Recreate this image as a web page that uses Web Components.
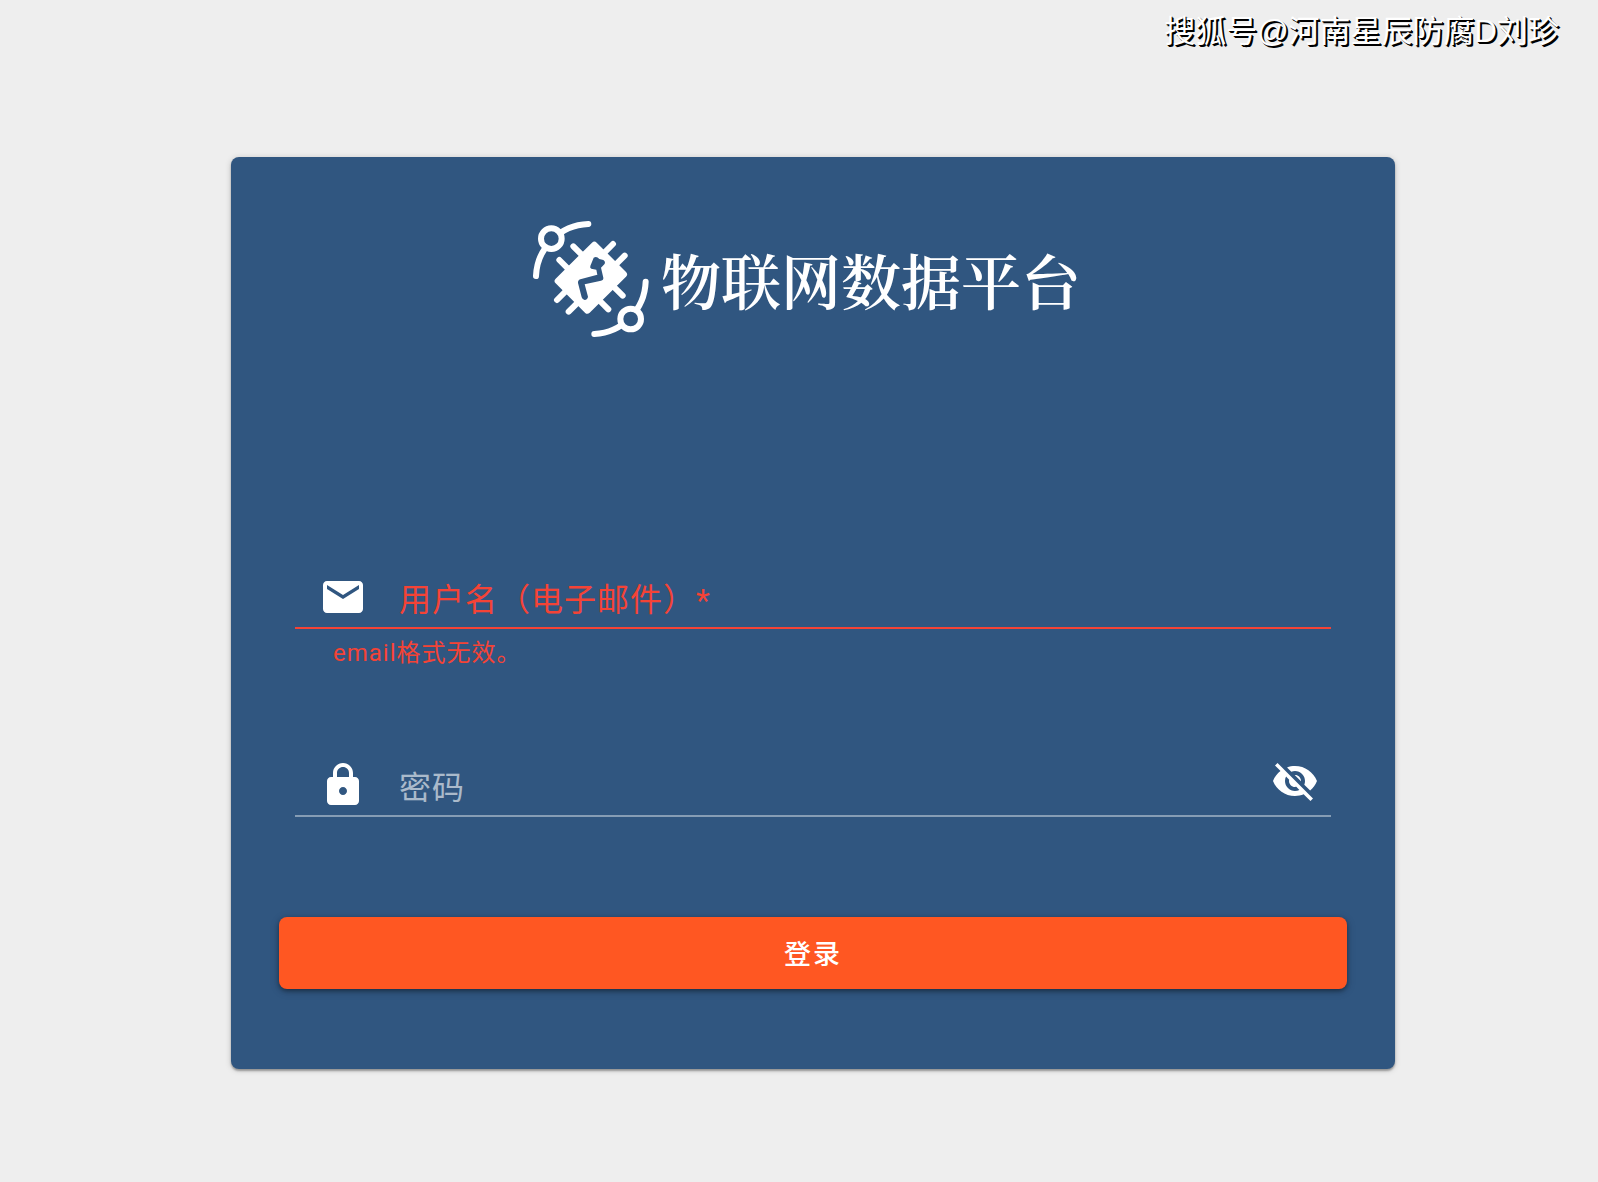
<!DOCTYPE html>
<html lang="zh-CN">
<head>
<meta charset="utf-8">
<meta name="viewport" content="width=device-width, initial-scale=1">
<title>物联网数据平台</title>
<style>
    :root {
        --color-page: #eeeeee;
        --color-primary: #305680;
        --color-accent: #ff5722;
        --color-error: #f44336;
        --color-hint: rgba(255, 255, 255, 0.6);
        --color-line: rgba(255, 255, 255, 0.42);
    }

    body {
        margin: 0;
        background: var(--color-page);
        font-family: Roboto, "Noto Sans CJK SC", sans-serif;
    }
</style>
</head>
<body>
<login-page>
    <page-credit slot="credit">搜狐号@河南星辰防腐D刘珍</page-credit>
    <login-card>
        <brand-logo slot="logo">物联网数据平台</brand-logo>
        <form-field icon="mail" type="email" label="用户名（电子邮件）" required error="email格式无效。"></form-field>
        <form-field icon="lock" type="password" label="密码"></form-field>
        <submit-button slot="action">登录</submit-button>
    </login-card>
</login-page>

<script>
const ICONS = {
    mail: 'M20 4H4c-1.1 0-1.99.9-1.99 2L2 18c0 1.1.9 2 2 2h16c1.1 0 2-.9 2-2V6c0-1.1-.9-2-2-2zm0 4l-8 5-8-5V6l8 5 8-5v2z',
    lock: 'M18 8h-1V6c0-2.76-2.24-5-5-5S7 3.24 7 6v2H6c-1.1 0-2 .9-2 2v10c0 1.1.9 2 2 2h12c1.1 0 2-.9 2-2V10c0-1.1-.9-2-2-2zm-6 9c-1.1 0-2-.9-2-2s.9-2 2-2 2 .9 2 2-.9 2-2 2zm3-9H9V6c0-1.71 1.39-3 3-3s3 1.29 3 3v2z',
    hidden: 'M12 7c2.76 0 5 2.24 5 5 0 .65-.13 1.26-.36 1.83l2.92 2.92c1.51-1.26 2.7-2.89 3.43-4.75-1.73-4.39-6-7.5-11-7.5-1.4 0-2.74.25-3.98.7l2.16 2.16C10.74 7.13 11.35 7 12 7zM2 4.27l2.28 2.28.46.46C3.08 8.3 1.78 10.02 1 12c1.73 4.39 6 7.5 11 7.5 1.55 0 3.03-.3 4.38-.84l.42.42L19.73 22 21 20.73 3.27 3 2 4.27zM7.53 9.8l1.55 1.55c-.05.21-.08.43-.08.65 0 1.66 1.34 3 3 3 .22 0 .44-.03.65-.08l1.55 1.55c-.67.33-1.41.53-2.2.53-2.76 0-5-2.24-5-5 0-.79.2-1.53.53-2.2zm4.31-.78l3.15 3.15.02-.16c0-1.66-1.34-3-3-3l-.17.01z',
    visible: 'M12 4.5C7 4.5 2.73 7.61 1 12c1.73 4.39 6 7.5 11 7.5s9.27-3.11 11-7.5c-1.73-4.39-6-7.5-11-7.5zM12 17c-2.76 0-5-2.24-5-5s2.24-5 5-5 5 2.24 5 5-2.24 5-5 5zm0-8c-1.66 0-3 1.34-3 3s1.34 3 3 3 3-1.34 3-3-1.34-3-3-3z'
};

const iconSvg = (name) => `<svg viewBox="0 0 24 24" aria-hidden="true"><path d="${ICONS[name]}"/></svg>`;

/** <login-page>: credit line on top, card below it. */
class LoginPage extends HTMLElement {
    constructor() {
        super();
        this.attachShadow({ mode: 'open' });
        this.shadowRoot.innerHTML = `
            <style>
                :host {
                    display: flex;
                    flex-direction: column;
                    min-height: 100vh;
                    box-sizing: border-box;
                }

                main {
                    padding: 93px 203px 113px 231px;
                }

                @media (max-width: 1000px) {
                    main {
                        padding: 32px 16px;
                    }
                }
            </style>
            <slot name="credit"></slot>
            <main><slot></slot></main>`;
    }
}

/** <page-credit>: outlined account name in the top corner. */
class PageCredit extends HTMLElement {
    constructor() {
        super();
        this.attachShadow({ mode: 'open' });
        this.shadowRoot.innerHTML = `
            <style>
                :host {
                    display: block;
                    padding: 0 39px;
                    font-family: "Liberation Sans", "Noto Sans CJK SC", sans-serif;
                    font-size: 31px;
                    line-height: 64px;
                    text-align: right;
                    color: #fff;
                    text-shadow: 1px 1px 0 #000, 2px 2px 0 #000;
                }
            </style>
            <slot></slot>`;
    }
}

/** <login-card>: blue panel holding the logo, the fields and the action. */
class LoginCard extends HTMLElement {
    constructor() {
        super();
        this.attachShadow({ mode: 'open' });
        this.shadowRoot.innerHTML = `
            <style>
                :host {
                    display: block;
                    padding: 64px 48px 80px;
                    border-radius: 8px;
                    background: var(--color-primary);
                    color: #fff;
                    box-shadow: 0 2px 2px rgba(0, 0, 0, 0.3), 0 1px 6px rgba(0, 0, 0, 0.18);
                }

                form {
                    display: flex;
                    flex-direction: column;
                    margin-top: 230px;
                }

                .fields {
                    display: flex;
                    flex-direction: column;
                    gap: 80px;
                    padding: 0 16px;
                    margin-bottom: 54px;
                }
            </style>
            <slot name="logo"></slot>
            <form novalidate>
                <div class="fields"><slot></slot></div>
                <slot name="action"></slot>
            </form>`;
    }
}

/** <brand-logo>: chip mark followed by the platform name. */
class BrandLogo extends HTMLElement {
    constructor() {
        super();
        this.attachShadow({ mode: 'open' });
        this.shadowRoot.innerHTML = `
            <style>
                :host {
                    display: flex;
                    justify-content: center;
                    align-items: center;
                    gap: 12px;
                    padding-right: 12px;
                }

                svg {
                    flex: none;
                    width: 116px;
                    height: 116px;
                }

                .line {
                    fill: none;
                    stroke: currentColor;
                    stroke-width: 18;
                    stroke-linecap: round;
                }

                .ring {
                    fill: var(--color-primary);
                    stroke: currentColor;
                    stroke-width: 18;
                }

                .chip {
                    fill: currentColor;
                    stroke: currentColor;
                    stroke-width: 20;
                    stroke-linejoin: round;
                }

                .bolt {
                    fill: var(--color-primary);
                }

                h1 {
                    margin: 0;
                    font-family: "Noto Serif CJK SC", "Noto Serif SC", "Source Han Serif SC", "Noto Sans CJK SC", serif;
                    font-size: 60px;
                    font-weight: 600;
                    line-height: 80px;
                }
            </style>
            <svg viewBox="39 33 348 348" aria-hidden="true">
                <path class="line" d="M48 198A163 163 0 0 1 205 42M377 215A163 163 0 0 1 223 372"/>
                <circle class="ring" cx="94" cy="86" r="31"/>
                <circle class="ring" cx="332" cy="327" r="31"/>
                <path class="line" d="M160 109l40 40M118 150l40 40M279 102l-40 40M314 137l-40 40M111 270l40-40M146 305l40-40M308 257l-40-40M265 298l-40-40"/>
                <path class="chip" d="M223 105L311 193L202 301L114 213Z"/>
                <path class="bolt" d="M221 143Q230 137 238 147L250 150Q258 156 253 163L243 173L250 203Q251 210 243 212L194 223L204 260Q203 269 194 270Q187 269 185 262L174 219Q173 211 181 208L232 194L229 179L214 176Q209 174 211 168Z"/>
            </svg>
            <h1><slot></slot></h1>`;
    }
}

/**
 * <form-field>
 *
 * Underlined text box with a leading icon. The label rests inside the box
 * while it is empty. Attributes: icon, type, label, required, error.
 */
class FormField extends HTMLElement {
    constructor() {
        super();
        this.attachShadow({ mode: 'open' });
    }

    connectedCallback() {
        this._render();
        const button = this.shadowRoot.querySelector('button');
        if (button) {
            button.addEventListener('click', () => this._toggle(button));
        }
    }

    _toggle(button) {
        const input = this.shadowRoot.querySelector('input');
        const show = input.type === 'password';
        input.type = show ? 'text' : 'password';
        button.innerHTML = iconSvg(show ? 'visible' : 'hidden');
    }

    _render() {
        const type = this.getAttribute('type') || 'text';
        const required = this.hasAttribute('required');
        const error = this.getAttribute('error') || '';

        this.shadowRoot.innerHTML = `
            <style>
                :host {
                    display: block;
                    --tone: var(--color-hint);
                    --line: var(--color-line);
                }

                :host([error]) {
                    --tone: var(--color-error);
                    --line: var(--color-error);
                }

                .row {
                    display: flex;
                    align-items: center;
                    height: 60px;
                    padding: 0 12px 0 24px;
                    border-bottom: 2px solid var(--line);
                }

                svg {
                    display: block;
                    flex: none;
                    width: 48px;
                    height: 48px;
                    fill: #fff;
                }

                .box {
                    display: grid;
                    flex: 1;
                    padding: 6px 0 0 32px;
                }

                label,
                input {
                    grid-area: 1 / 1;
                    font: inherit;
                    font-size: 32px;
                    line-height: 48px;
                    letter-spacing: 1px;
                }

                label {
                    color: var(--tone);
                    pointer-events: none;
                }

                .box:focus-within label,
                input:not(:placeholder-shown) + label {
                    visibility: hidden;
                }

                input {
                    width: 100%;
                    height: 48px;
                    padding: 0;
                    border: 0;
                    outline: 0;
                    background: none;
                    color: #fff;
                }

                button {
                    flex: none;
                    margin-bottom: 8px;
                    padding: 0;
                    border: 0;
                    background: none;
                    cursor: pointer;
                }

                p {
                    min-height: 32px;
                    margin: 0;
                    padding: 8px 38px 6px;
                    font-size: 24px;
                    line-height: 32px;
                    letter-spacing: 1px;
                    color: var(--color-error);
                }
            </style>
            <div class="row">
                ${iconSvg(this.getAttribute('icon'))}
                <div class="box">
                    <input id="field" type="${type}" placeholder=" " aria-describedby="message" ${required ? 'required' : ''}>
                    <label for="field">${this.getAttribute('label')}${required ? '*' : ''}</label>
                </div>
                ${type === 'password' ? `<button type="button" aria-label="显示密码">${iconSvg('hidden')}</button>` : ''}
            </div>
            <p id="message">${error}</p>`;
    }
}

/** <submit-button>: full-width raised button. */
class SubmitButton extends HTMLElement {
    constructor() {
        super();
        this.attachShadow({ mode: 'open' });
        this.shadowRoot.innerHTML = `
            <style>
                :host {
                    display: block;
                }

                button {
                    display: block;
                    width: 100%;
                    height: 72px;
                    padding: 0 32px 2px;
                    border: 0;
                    border-radius: 8px;
                    background: var(--color-accent);
                    color: #fff;
                    font: inherit;
                    font-size: 27px;
                    font-weight: 500;
                    letter-spacing: 2px;
                    box-shadow: 0 2px 4px rgba(0, 0, 0, 0.35), 0 2px 10px rgba(0, 0, 0, 0.2);
                    cursor: pointer;
                }
            </style>
            <button type="submit"><slot></slot></button>`;
    }
}

customElements.define('login-page', LoginPage);
customElements.define('page-credit', PageCredit);
customElements.define('login-card', LoginCard);
customElements.define('brand-logo', BrandLogo);
customElements.define('form-field', FormField);
customElements.define('submit-button', SubmitButton);
</script>
</body>
</html>
